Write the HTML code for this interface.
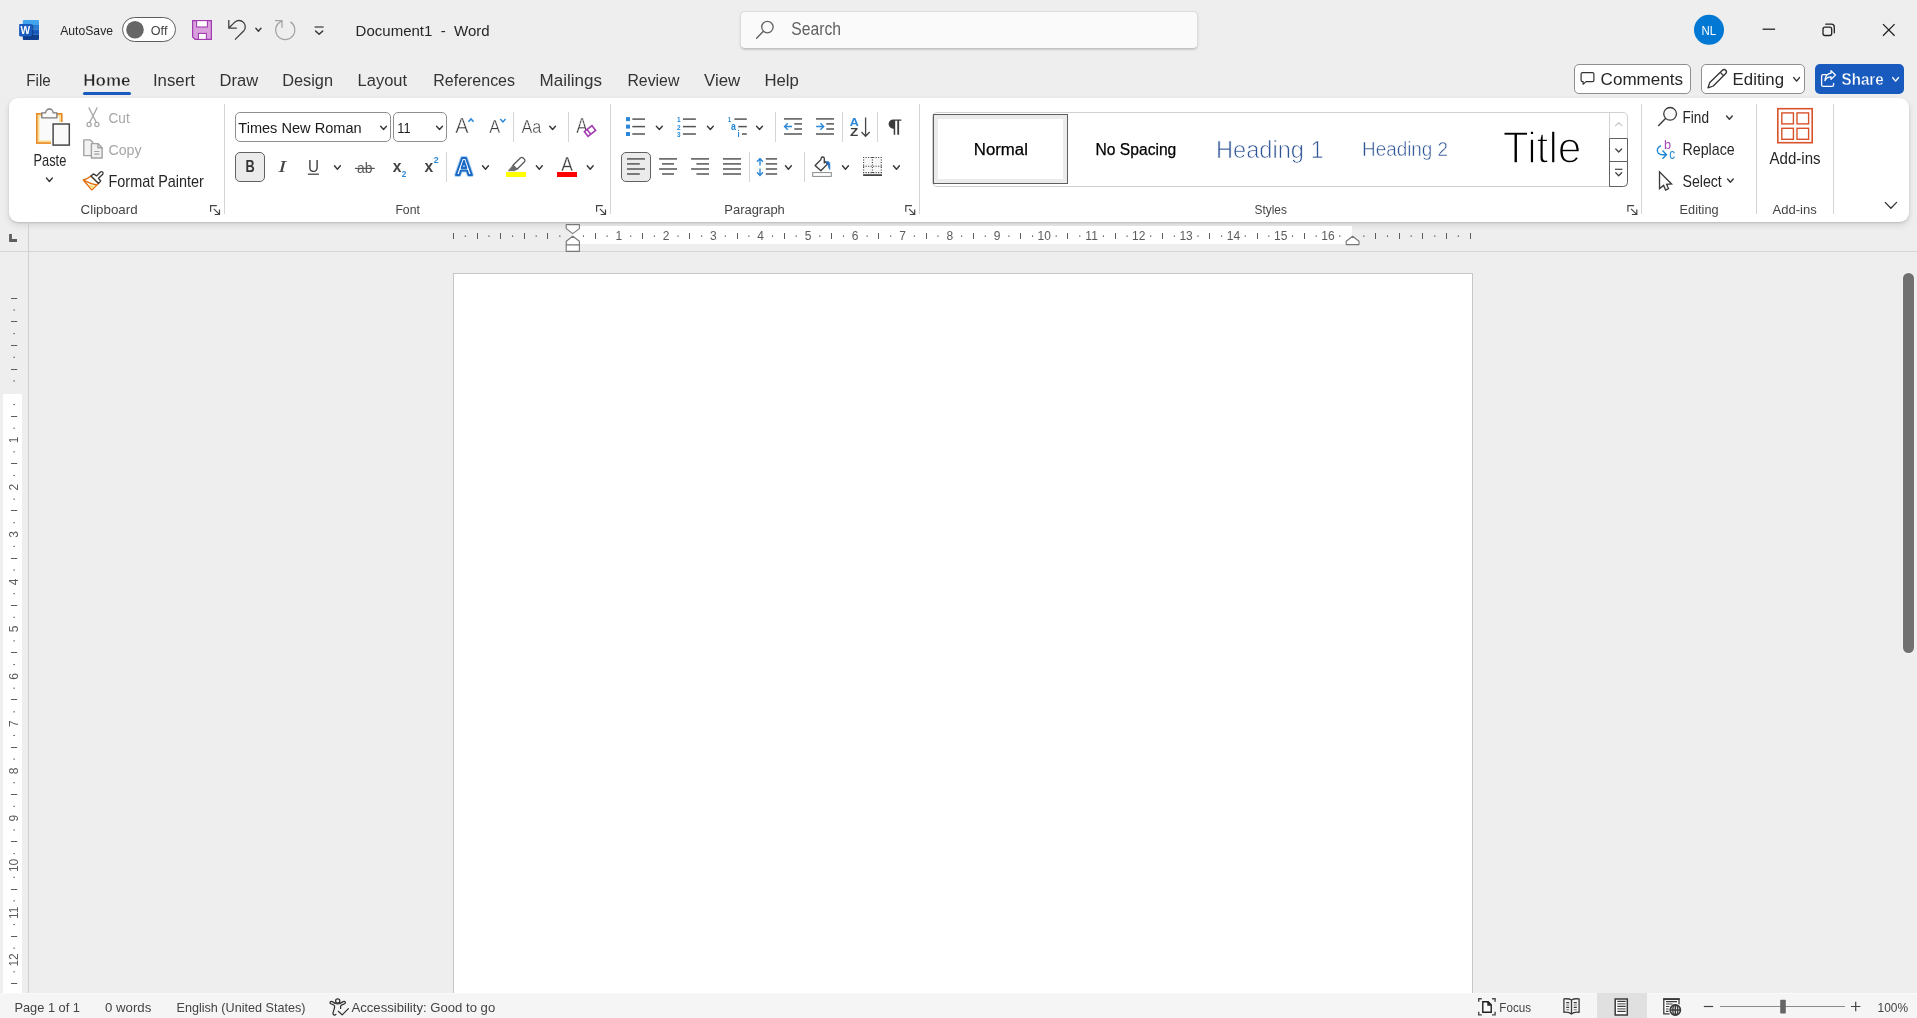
<!DOCTYPE html>
<html lang="en"><head><meta charset="utf-8"><title>Document1 - Word</title>
<style>
html,body{margin:0;padding:0}
body{width:1917px;height:1018px;overflow:hidden;background:#eeeeee;position:relative;font-family:"Liberation Sans",sans-serif}
div{position:absolute;box-sizing:border-box}
svg{position:absolute;left:0;top:0;will-change:transform}
text{font-family:"Liberation Sans",sans-serif;white-space:pre}
</style></head><body>
<div style="left:740px;top:10.5px;width:458px;height:38.5px;background:#fafafa;border:1px solid #dddddd;border-bottom-color:#c2c2c2;border-radius:5px;box-shadow:0 1px 2px rgba(0,0,0,.16)"></div>
<div style="left:1574px;top:64px;width:117px;height:30px;background:#fff;border:1px solid #8f8f8f;border-radius:5px"></div>
<div style="left:1701px;top:64px;width:104px;height:30px;background:#fff;border:1px solid #8f8f8f;border-radius:5px"></div>
<div style="left:1815px;top:64px;width:89px;height:30px;background:#185abd;border-radius:5px"></div>
<div style="left:9px;top:98px;width:1900px;height:124px;background:#fff;border-radius:9px;box-shadow:0 1px 2px rgba(0,0,0,.14),0 3px 7px rgba(0,0,0,.11)"></div>
<div style="left:235px;top:112px;width:156px;height:30px;background:#fff;border:1px solid #8f8f8f;border-radius:5px"></div>
<div style="left:393px;top:112px;width:54px;height:30px;background:#fff;border:1px solid #8f8f8f;border-radius:5px"></div>
<div style="left:235px;top:152px;width:30px;height:30px;background:#ebebeb;border:1px solid #616161;border-radius:5px"></div>
<div style="left:621px;top:152px;width:30px;height:30px;background:#ebebeb;border:1px solid #616161;border-radius:5px"></div>
<div style="left:932px;top:112px;width:696px;height:75px;background:#fff;border:1px solid #d1d1d1;border-radius:5px"></div>
<div style="left:933px;top:114px;width:135px;height:70px;background:#fff;border:1px solid #5e5e5e;box-shadow:inset 0 0 0 4px #ebebeb"></div>
<div style="left:573px;top:226px;width:779px;height:18px;background:#fff"></div>
<div style="left:3px;top:394px;width:19px;height:599px;background:#fff"></div>
<div style="left:0;top:251px;width:1917px;height:1px;background:#d6d6d6"></div>
<div style="left:28px;top:222px;width:1px;height:771px;background:#d0d0d0"></div>
<div style="left:453px;top:273px;width:1020px;height:760px;background:#fff;border:1px solid #c6c6c6"></div>
<div style="left:1903px;top:273px;width:11px;height:380px;background:#707070;border-radius:5.5px;box-shadow:0 0 0 1px #f3f3f3"></div>
<div style="left:0;top:993px;width:1917px;height:25px;background:#f5f5f5;border-top:1px solid #fafafa"></div>
<div style="left:1597px;top:993px;width:50px;height:25px;background:#e0e0e0"></div>
<svg width="1917" height="1018" viewBox="0 0 1917 1018">
<g><path d="M23.8 20h14.2a1 1 0 0 1 1 1V24.9H22.8V21a1 1 0 0 1 1-1z" fill="#41a5ee"/><rect x="22.8" y="24.9" width="16.2" height="4.95" fill="#2b7cd3"/><rect x="22.8" y="29.85" width="16.2" height="4.95" fill="#185abd"/><path d="M22.8 34.8H39v4.1a1 1 0 0 1-1 1H23.8a1 1 0 0 1-1-1z" fill="#103f91"/><rect x="23.4" y="24.6" width="9.8" height="12.9" rx="1.2" fill="#0a2a66" opacity=".5"/><rect x="19.1" y="23.9" width="12.8" height="12.5" rx="1.1" fill="#1a5cbe"/></g>
<text x="20.5" y="33.8" font-size="11.2" fill="#ffffff" font-weight="700" textLength="9.6" lengthAdjust="spacingAndGlyphs">W</text>
<text x="60.2" y="34.8" font-size="13.5" fill="#262626" textLength="52.8" lengthAdjust="spacingAndGlyphs">AutoSave</text>
<rect x="122.5" y="17.5" width="53" height="24" rx="12" fill="#ffffff" stroke="#5c5c5c" stroke-width="1"/>
<circle cx="135" cy="29.8" r="8.8" fill="#666666"/>
<text x="150.8" y="34.8" font-size="13.5" fill="#444444" textLength="16.6" lengthAdjust="spacingAndGlyphs">Off</text>
<path d="M192.6 20.6h18.8v18.8h-16.3l-2.5-2.5z" fill="#d9a0dc" stroke="#a23ab1" stroke-width="1.2" stroke-linejoin="miter"/><rect x="196.6" y="20.6" width="10.8" height="6.4" fill="#ffffff" stroke="#a23ab1" stroke-width="1.1"/><rect x="198.4" y="33.4" width="8" height="6" fill="#ffffff" stroke="#a23ab1" stroke-width="1.1"/>
<path d="M228.8 20.1V28.1H236.8 M228.9 28L234.75 22.15A6.3 6.3 0 0 1 243.65 31.05L235 39.6" fill="none" stroke="#404040" stroke-width="1.3" stroke-linejoin="miter"/>
<path d="M255.85 28.30 L258.40 31.20 L260.95 28.30" fill="none" stroke="#3a3a3a" stroke-width="1.45" stroke-linecap="round" stroke-linejoin="round"/>
<path d="M275 20.5H282V27.7 M282 20.5L277.8 24A9.6 9.6 0 1 0 290.4 21.9" fill="none" stroke="#a3a3a3" stroke-width="1.25"/>
<path d="M314.6 27h9" stroke="#444" stroke-width="1.3" fill="none"/>
<path d="M315.65 31.10 L319.15 34.20 L322.65 31.10" fill="none" stroke="#3a3a3a" stroke-width="1.45" stroke-linecap="round" stroke-linejoin="round"/>
<text x="355.6" y="36.0" font-size="15.5" fill="#262626" textLength="134.0" lengthAdjust="spacingAndGlyphs">Document1  -  Word</text>
<circle cx="767.4" cy="27.1" r="5.7" fill="none" stroke="#616161" stroke-width="1.3"/><path d="M763.4 31.3L756.6 38.3" stroke="#616161" stroke-width="1.4" stroke-linecap="round"/>
<text x="791.2" y="34.8" font-size="17.5" fill="#616161" textLength="49.8" lengthAdjust="spacingAndGlyphs">Search</text>
<circle cx="1709" cy="29.8" r="15" fill="#0078d4"/>
<text x="1701.6" y="34.6" font-size="12.5" fill="#ffffff" textLength="14.6" lengthAdjust="spacingAndGlyphs">NL</text>
<path d="M1762.6 29.2h12.5" stroke="#222" stroke-width="1.3" fill="none"/>
<rect x="1823" y="27.2" width="8.7" height="8.3" rx="2" fill="none" stroke="#222" stroke-width="1.3"/><path d="M1825.8 24.2H1831.3A3 3 0 0 1 1834.3 27.2V32.8" fill="none" stroke="#222" stroke-width="1.3" stroke-linecap="round"/>
<path d="M1883 24.1L1894.6 35.8M1894.6 24.1L1883 35.8" stroke="#222" stroke-width="1.3" fill="none"/>
<text x="26.3" y="86.1" font-size="17.2" fill="#333333" textLength="24.5" lengthAdjust="spacingAndGlyphs">File</text>
<text x="83.3" y="86.1" font-size="17" fill="#262626" font-weight="700" textLength="47.1" lengthAdjust="spacingAndGlyphs" stroke="#eeeeee" stroke-width=".45">Home</text>
<text x="152.9" y="86.1" font-size="17.2" fill="#333333" textLength="42.1" lengthAdjust="spacingAndGlyphs">Insert</text>
<text x="219.5" y="86.1" font-size="17.2" fill="#333333" textLength="38.6" lengthAdjust="spacingAndGlyphs">Draw</text>
<text x="282.2" y="86.1" font-size="17.2" fill="#333333" textLength="50.8" lengthAdjust="spacingAndGlyphs">Design</text>
<text x="357.6" y="86.1" font-size="17.2" fill="#333333" textLength="49.5" lengthAdjust="spacingAndGlyphs">Layout</text>
<text x="433.3" y="86.1" font-size="17.2" fill="#333333" textLength="81.7" lengthAdjust="spacingAndGlyphs">References</text>
<text x="539.6" y="86.1" font-size="17.2" fill="#333333" textLength="62.4" lengthAdjust="spacingAndGlyphs">Mailings</text>
<text x="627.4" y="86.1" font-size="17.2" fill="#333333" textLength="52.0" lengthAdjust="spacingAndGlyphs">Review</text>
<text x="704.1" y="86.1" font-size="17.2" fill="#333333" textLength="36.2" lengthAdjust="spacingAndGlyphs">View</text>
<text x="764.4" y="86.1" font-size="17.2" fill="#333333" textLength="34.4" lengthAdjust="spacingAndGlyphs">Help</text>
<rect x="83" y="92" width="48" height="3" rx="1.5" fill="#185abd"/>
<path d="M1582.5 72.6h10a1.4 1.4 0 0 1 1.4 1.4v6.2a1.4 1.4 0 0 1-1.4 1.4h-6.4l-3 2.6v-2.6h-.6a1.4 1.4 0 0 1-1.4-1.4V74a1.4 1.4 0 0 1 1.4-1.4z" fill="none" stroke="#333" stroke-width="1.2" stroke-linejoin="round"/>
<text x="1600.6" y="84.8" font-size="17.2" fill="#262626" textLength="82.4" lengthAdjust="spacingAndGlyphs">Comments</text>
<path d="M1722.4 70.2a2.3 2.3 0 0 1 3.3 3.3L1713.3 86l-5.3 1.8 1.8-5.3z M1720.3 72.4l3.3 3.3" fill="none" stroke="#333" stroke-width="1.3" stroke-linejoin="round"/>
<text x="1732.6" y="84.8" font-size="17.2" fill="#262626" textLength="51.4" lengthAdjust="spacingAndGlyphs">Editing</text>
<path d="M1793.75 77.60 L1796.60 81.10 L1799.45 77.60" fill="none" stroke="#333" stroke-width="1.45" stroke-linecap="round" stroke-linejoin="round"/>
<path d="M1826.6 74.6H1823.2a1.6 1.6 0 0 0-1.6 1.6v8.6a1.6 1.6 0 0 0 1.6 1.6h8.8a1.6 1.6 0 0 0 1.6-1.6V83.4" fill="none" stroke="#fff" stroke-width="1.3" stroke-linecap="round"/><path d="M1831 70.6L1835.4 75L1831 79.4V76.8C1828 76.8 1826.2 78 1824.9 80.6C1825.2 76.6 1827.4 73.6 1831 73.2z" fill="none" stroke="#fff" stroke-width="1.3" stroke-linejoin="round"/>
<text x="1841.6" y="84.8" font-size="17" fill="#ffffff" font-weight="700" textLength="42.0" lengthAdjust="spacingAndGlyphs" stroke="#185abd" stroke-width=".4">Share</text>
<path d="M1892.75 77.60 L1895.60 81.10 L1898.45 77.60" fill="none" stroke="#fff" stroke-width="1.45" stroke-linecap="round" stroke-linejoin="round"/>
<rect x="224" y="104" width="1" height="110" fill="#d4d4d4"/>
<rect x="610" y="104" width="1" height="110" fill="#d4d4d4"/>
<rect x="919" y="104" width="1" height="110" fill="#d4d4d4"/>
<rect x="1641" y="104" width="1" height="110" fill="#d4d4d4"/>
<rect x="1756" y="104" width="1" height="110" fill="#d4d4d4"/>
<rect x="1833" y="104" width="1" height="110" fill="#d4d4d4"/>
<rect x="513" y="112" width="1" height="30" fill="#d4d4d4"/>
<rect x="568" y="112" width="1" height="30" fill="#d4d4d4"/>
<rect x="775" y="112" width="1" height="30" fill="#d4d4d4"/>
<rect x="842" y="112" width="1" height="30" fill="#d4d4d4"/>
<rect x="877" y="112" width="1" height="30" fill="#d4d4d4"/>
<rect x="446" y="152" width="1" height="30" fill="#d4d4d4"/>
<rect x="749" y="152" width="1" height="30" fill="#d4d4d4"/>
<rect x="804" y="152" width="1" height="30" fill="#d4d4d4"/>
<rect x="36.9" y="113.9" width="24.8" height="29.1" fill="#fafafa" stroke="#e8851f" stroke-width="1.7"/><rect x="38.6" y="115.6" width="21.4" height="25.7" fill="none" stroke="#f9dc8c" stroke-width="1.6"/><path d="M41.8 117.8V112.8H45.6A3.8 3.8 0 0 1 53.2 112.8H56.9V117.8z" fill="#fafafa" stroke="#7d7b78" stroke-width="1.35" stroke-linejoin="round"/><rect x="51" y="122" width="20" height="22" fill="#fff"/><rect x="53.1" y="124" width="16.2" height="21.1" fill="#fafafa" stroke="#484848" stroke-width="1.5"/>
<text x="33.5" y="165.9" font-size="15.7" fill="#262626" textLength="32.8" lengthAdjust="spacingAndGlyphs">Paste</text>
<path d="M46.45 178.00 L49.40 181.40 L52.35 178.00" fill="none" stroke="#3a3a3a" stroke-width="1.45" stroke-linecap="round" stroke-linejoin="round"/>
<g fill="none" stroke="#a9a9a9" stroke-width="1.25"><path d="M88.7 107.4L96.3 122.4M97.3 107.4L89.7 122.4"/><circle cx="89.1" cy="124.5" r="2.1"/><circle cx="96.9" cy="124.5" r="2.1"/></g>
<text x="108.5" y="122.8" font-size="15.5" fill="#a6a6a6" textLength="21.2" lengthAdjust="spacingAndGlyphs">Cut</text>
<g fill="#f2f2f2" stroke="#a2a2a2" stroke-width="1.4" stroke-linejoin="round"><path d="M83.8 139.9H90.4L92.8 142.3V155.6H83.8z"/><path d="M91.4 143.6H97.9L102.1 147.8V158H91.4z"/><path d="M97.9 143.6V147.8H102.1" fill="none"/><path d="M94.2 151.5H99.4M94.2 154.2H99.4" fill="none" stroke-width="1.2"/></g>
<text x="108.5" y="154.7" font-size="15.5" fill="#a6a6a6" textLength="33.1" lengthAdjust="spacingAndGlyphs">Copy</text>
<g stroke-linejoin="round" transform="translate(0 .6)"><path d="M91 175.4C88.6 177.6 86 178.7 83.3 179.4L91.7 189.3L98.5 182.8z" fill="#fdfdfd" stroke="#e36c0a" stroke-width="1.35"/><path d="M88.6 183.6L95.4 185.3L91.7 188.5z" fill="#fbe08a" stroke="none"/><path d="M84.4 180.1C88.4 182.2 92.6 183.7 96.7 184.4" stroke="#e36c0a" stroke-width="1.35" fill="none"/><path d="M91 175.4L93.3 173.3L96.7 175.3L100.4 171.4A1.65 1.65 0 0 1 102.8 173.6L98.5 177.7L100.7 180.4L98.6 182.8z" fill="#fff" stroke="#3a3a3a" stroke-width="1.35"/></g>
<text x="108.5" y="186.5" font-size="15.7" fill="#262626" textLength="95.4" lengthAdjust="spacingAndGlyphs">Format Painter</text>
<text x="80.6" y="213.7" font-size="13.5" fill="#444444" textLength="57.0" lengthAdjust="spacingAndGlyphs">Clipboard</text>
<path d="M210.6 211.8V205.6H216.8 M213.8 208.8L219.4 214.4 M219.5 209.6V214.5H214.6" fill="none" stroke="#444" stroke-width="1.2"/>
<text x="238.3" y="132.8" font-size="15.5" fill="#1a1a1a" textLength="123.3" lengthAdjust="spacingAndGlyphs">Times New Roman</text>
<path d="M380.65 126.20 L383.55 129.50 L386.45 126.20" fill="none" stroke="#3a3a3a" stroke-width="1.45" stroke-linecap="round" stroke-linejoin="round"/>
<text x="397.3" y="132.8" font-size="15.5" fill="#1a1a1a" textLength="13.3" lengthAdjust="spacingAndGlyphs">11</text>
<path d="M436.55 126.20 L439.50 129.50 L442.45 126.20" fill="none" stroke="#3a3a3a" stroke-width="1.45" stroke-linecap="round" stroke-linejoin="round"/>
<text x="455.2" y="133.2" font-size="22.6" fill="#3d3d3d" textLength="13.3" lengthAdjust="spacingAndGlyphs" stroke="#fff" stroke-width=".5">A</text>
<path d="M468.4 121.8L471 118.9L473.6 121.8" fill="none" stroke="#2b88d8" stroke-width="1.5"/>
<text x="489.3" y="133.2" font-size="17.8" fill="#3d3d3d" textLength="11.0" lengthAdjust="spacingAndGlyphs" stroke="#fff" stroke-width=".4">A</text>
<path d="M500.3 119.1L502.9 122L505.5 119.1" fill="none" stroke="#2b88d8" stroke-width="1.5"/>
<text x="521.5" y="133.2" font-size="17.6" fill="#3d3d3d" textLength="19.9" lengthAdjust="spacingAndGlyphs" stroke="#fff" stroke-width=".4">Aa</text>
<path d="M549.75 126.20 L552.60 129.50 L555.45 126.20" fill="none" stroke="#3a3a3a" stroke-width="1.45" stroke-linecap="round" stroke-linejoin="round"/>
<text x="576.3" y="133.2" font-size="22.6" fill="#3d3d3d" textLength="11.5" lengthAdjust="spacingAndGlyphs" stroke="#fff" stroke-width=".5">A</text>
<g transform="rotate(-38 590 131)"><rect x="585.2" y="128" width="9.6" height="6" fill="#fff" stroke="#a23ab1" stroke-width="1.6"/><path d="M588.6 128V134" stroke="#a23ab1" stroke-width="1.5"/></g>
<text x="245.6" y="171.6" font-size="16.6" fill="#333" font-weight="700" textLength="9.2" lengthAdjust="spacingAndGlyphs">B</text>
<text x="278.2" y="171.6" font-size="17.5" fill="#444" textLength="8.0" lengthAdjust="spacingAndGlyphs" font-style="italic" style="font-family:'Liberation Serif',serif">I</text>
<text x="307.9" y="171.6" font-size="16.6" fill="#444" textLength="11.0" lengthAdjust="spacingAndGlyphs">U</text>
<path d="M307.9 174.2H318.9" stroke="#444" stroke-width="1.3" fill="none"/>
<path d="M334.45 165.80 L337.40 169.30 L340.35 165.80" fill="none" stroke="#3a3a3a" stroke-width="1.45" stroke-linecap="round" stroke-linejoin="round"/>
<text x="357.0" y="173.0" font-size="15" fill="#555" textLength="15.4" lengthAdjust="spacingAndGlyphs">ab</text>
<path d="M354.9 168.4H374.8" stroke="#555" stroke-width="1.2" fill="none"/>
<text x="392.7" y="171.6" font-size="17" fill="#444" font-weight="700" textLength="8.7" lengthAdjust="spacingAndGlyphs">x</text>
<text x="401.8" y="177.1" font-size="8.8" fill="#2b88d8" font-weight="700" textLength="4.6" lengthAdjust="spacingAndGlyphs">2</text>
<text x="424.5" y="171.6" font-size="17" fill="#444" font-weight="700" textLength="8.7" lengthAdjust="spacingAndGlyphs">x</text>
<text x="433.7" y="163.3" font-size="9" fill="#2b88d8" font-weight="700" textLength="4.9" lengthAdjust="spacingAndGlyphs">2</text>
<text x="455.6" y="174.6" font-size="24" fill="#ffffff" font-weight="700" textLength="17.0" lengthAdjust="spacingAndGlyphs" stroke="#a9d1f3" stroke-width="3.8" stroke-linejoin="round">A</text>
<text x="455.6" y="174.6" font-size="24" fill="#ffffff" font-weight="700" textLength="17.0" lengthAdjust="spacingAndGlyphs" stroke="#1a69c4" stroke-width="2" stroke-linejoin="round">A</text>
<path d="M482.55 165.80 L485.50 169.30 L488.45 165.80" fill="none" stroke="#3a3a3a" stroke-width="1.45" stroke-linecap="round" stroke-linejoin="round"/>
<path d="M520.6 157.8a1.6 1.6 0 0 1 2.3 0l1.6 1.6a1.6 1.6 0 0 1 0 2.3L517 169.2L513 165.2z" fill="#fff" stroke="#555" stroke-width="1.25" stroke-linejoin="round"/><path d="M513 165.2L517 169.2L514.6 170.7H508.4z" fill="#6a6a6a" stroke="#6a6a6a" stroke-width=".8" stroke-linejoin="round"/>
<rect x="506" y="172" width="20" height="5" fill="#ffff00"/>
<path d="M536.35 165.80 L539.30 169.30 L542.25 165.80" fill="none" stroke="#3a3a3a" stroke-width="1.45" stroke-linecap="round" stroke-linejoin="round"/>
<text x="561.3" y="170.8" font-size="19.6" fill="#3d3d3d" textLength="11.7" lengthAdjust="spacingAndGlyphs" stroke="#fff" stroke-width=".3">A</text>
<rect x="557" y="172" width="20" height="5" fill="#ff0000"/>
<path d="M587.25 165.80 L590.20 169.30 L593.15 165.80" fill="none" stroke="#3a3a3a" stroke-width="1.45" stroke-linecap="round" stroke-linejoin="round"/>
<path d="M596.6 211.8V205.6H602.8 M599.8 208.8L605.4 214.4 M605.5 209.6V214.5H600.6" fill="none" stroke="#444" stroke-width="1.2"/>
<text x="395.4" y="213.7" font-size="13.5" fill="#444444" textLength="24.5" lengthAdjust="spacingAndGlyphs">Font</text>
<rect x="626" y="117.1" width="4" height="4" fill="#2b88d8"/>
<path d="M632.3 119.1H645.0" stroke="#555555" stroke-width="1.5" fill="none"/>
<rect x="626" y="124.6" width="4" height="4" fill="#2b88d8"/>
<path d="M632.3 126.6H645.0" stroke="#555555" stroke-width="1.5" fill="none"/>
<rect x="626" y="132.0" width="4" height="4" fill="#2b88d8"/>
<path d="M632.3 134.0H645.0" stroke="#555555" stroke-width="1.5" fill="none"/>
<path d="M656.35 126.20 L659.35 129.50 L662.35 126.20" fill="none" stroke="#3a3a3a" stroke-width="1.45" stroke-linecap="round" stroke-linejoin="round"/>
<text x="676.9" y="122.1" font-size="7.3" fill="#1e86d4" font-weight="700" textLength="3.6" lengthAdjust="spacingAndGlyphs">1</text>
<path d="M682.9 119.1H695.9" stroke="#555555" stroke-width="1.5" fill="none"/>
<text x="676.9" y="129.6" font-size="7.3" fill="#1e86d4" font-weight="700" textLength="3.6" lengthAdjust="spacingAndGlyphs">2</text>
<path d="M682.9 126.6H695.9" stroke="#555555" stroke-width="1.5" fill="none"/>
<text x="676.9" y="137.0" font-size="7.3" fill="#1e86d4" font-weight="700" textLength="3.6" lengthAdjust="spacingAndGlyphs">3</text>
<path d="M682.9 134.0H695.9" stroke="#555555" stroke-width="1.5" fill="none"/>
<path d="M707.45 126.20 L710.35 129.50 L713.25 126.20" fill="none" stroke="#3a3a3a" stroke-width="1.45" stroke-linecap="round" stroke-linejoin="round"/>
<text x="728.1" y="122.1" font-size="7.3" fill="#1e86d4" font-weight="700" textLength="3.1" lengthAdjust="spacingAndGlyphs">1</text>
<path d="M734.4 119.1H746.8" stroke="#555555" stroke-width="1.5" fill="none"/>
<text x="731.1" y="129.8" font-size="10.6" fill="#1e86d4" font-weight="700" textLength="4.9" lengthAdjust="spacingAndGlyphs">a</text>
<path d="M738.3 126.6H746.8" stroke="#555555" stroke-width="1.5" fill="none"/>
<text x="737.6" y="136.9" font-size="8.8" fill="#1e86d4" font-weight="700" textLength="2.2" lengthAdjust="spacingAndGlyphs">i</text>
<path d="M742.0 134.0H746.8" stroke="#555555" stroke-width="1.5" fill="none"/>
<path d="M756.55 126.20 L759.50 129.50 L762.45 126.20" fill="none" stroke="#3a3a3a" stroke-width="1.45" stroke-linecap="round" stroke-linejoin="round"/>
<path d="M784.0 118.9H802.0" stroke="#555555" stroke-width="1.5" fill="none"/>
<path d="M784.0 134.0H802.0" stroke="#555555" stroke-width="1.5" fill="none"/>
<path d="M794.3 123.9H802.0" stroke="#555555" stroke-width="1.5" fill="none"/>
<path d="M794.3 129.0H802.0" stroke="#555555" stroke-width="1.5" fill="none"/>
<path d="M784.6 126.5H792 M787.8 123.2L784.5 126.5L787.8 129.8" fill="none" stroke="#2b88d8" stroke-width="1.4"/>
<path d="M816.0 118.9H834.0" stroke="#555555" stroke-width="1.5" fill="none"/>
<path d="M816.0 134.0H834.0" stroke="#555555" stroke-width="1.5" fill="none"/>
<path d="M826.3 123.9H834.0" stroke="#555555" stroke-width="1.5" fill="none"/>
<path d="M826.3 129.0H834.0" stroke="#555555" stroke-width="1.5" fill="none"/>
<path d="M816.2 126.5H823.6 M820.4 123.2L823.7 126.5L820.4 129.8" fill="none" stroke="#2b88d8" stroke-width="1.4"/>
<text x="849.7" y="125.5" font-size="11.6" fill="#2b88d8" font-weight="700" textLength="9.1" lengthAdjust="spacingAndGlyphs">A</text>
<text x="850.0" y="136.4" font-size="11" fill="#3d3d3d" font-weight="700" textLength="8.2" lengthAdjust="spacingAndGlyphs">Z</text>
<path d="M865.6 117.4V135.8 M861.5 132L865.6 136.2L869.7 132" fill="none" stroke="#444" stroke-width="1.3"/>
<path d="M893.2 119.5H901.4V120.8H899.1V134.7H897.3V120.8H895.2V134.7H893.7V128.7H893.2A4.6 4.6 0 0 1 893.2 119.5z" fill="#3b3b3b"/>
<path d="M627.0 158.9H645.0" stroke="#555555" stroke-width="1.5" fill="none"/>
<path d="M659.1 158.9H677.0" stroke="#555555" stroke-width="1.5" fill="none"/>
<path d="M691.1 158.9H709.0" stroke="#555555" stroke-width="1.5" fill="none"/>
<path d="M723.0 158.9H741.0" stroke="#555555" stroke-width="1.5" fill="none"/>
<path d="M765.8 158.9H777.1" stroke="#555555" stroke-width="1.5" fill="none"/>
<path d="M627.0 163.9H639.8" stroke="#555555" stroke-width="1.5" fill="none"/>
<path d="M662.0 163.9H674.0" stroke="#555555" stroke-width="1.5" fill="none"/>
<path d="M696.4 163.9H709.0" stroke="#555555" stroke-width="1.5" fill="none"/>
<path d="M723.0 163.9H741.0" stroke="#555555" stroke-width="1.5" fill="none"/>
<path d="M765.8 163.9H777.1" stroke="#555555" stroke-width="1.5" fill="none"/>
<path d="M627.0 169.0H645.0" stroke="#555555" stroke-width="1.5" fill="none"/>
<path d="M659.1 169.0H677.0" stroke="#555555" stroke-width="1.5" fill="none"/>
<path d="M691.1 169.0H709.0" stroke="#555555" stroke-width="1.5" fill="none"/>
<path d="M723.0 169.0H741.0" stroke="#555555" stroke-width="1.5" fill="none"/>
<path d="M765.8 169.0H777.1" stroke="#555555" stroke-width="1.5" fill="none"/>
<path d="M627.0 174.0H639.8" stroke="#555555" stroke-width="1.5" fill="none"/>
<path d="M662.0 174.0H674.0" stroke="#555555" stroke-width="1.5" fill="none"/>
<path d="M696.4 174.0H709.0" stroke="#555555" stroke-width="1.5" fill="none"/>
<path d="M723.0 174.0H741.0" stroke="#555555" stroke-width="1.5" fill="none"/>
<path d="M765.8 174.0H777.1" stroke="#555555" stroke-width="1.5" fill="none"/>
<path d="M760 158.7V165.6 M760 168.4V175.3 M757 161.8L760 158.6L763 161.8 M757 172.2L760 175.4L763 172.2" fill="none" stroke="#2b88d8" stroke-width="1.4"/>
<path d="M785.45 165.80 L788.40 169.30 L791.35 165.80" fill="none" stroke="#3a3a3a" stroke-width="1.45" stroke-linecap="round" stroke-linejoin="round"/>
<path d="M821.1 159.4L815.1 165.5L820.9 170.8L827.6 163.9L824.4 161" fill="#fafafa" stroke="#3a3a3a" stroke-width="1.35" stroke-linejoin="round"/><path d="M821.1 159.4V158.6A1.6 1.6 0 0 1 824.3 158.6V163.6" fill="none" stroke="#3a3a3a" stroke-width="1.3"/><path d="M826 161.7C828.2 160.8 829.8 162 829.8 164.2V169.6C828.4 168 828.6 165.2 827.6 163.9z" fill="#1e6fc4" stroke="#1e6fc4" stroke-width=".7" stroke-linejoin="round"/>
<rect x="812.7" y="172.6" width="18.6" height="3.8" fill="#fff" stroke="#8a8a8a" stroke-width="1"/>
<path d="M842.45 165.80 L845.45 169.30 L848.45 165.80" fill="none" stroke="#3a3a3a" stroke-width="1.45" stroke-linecap="round" stroke-linejoin="round"/>
<rect x="863.6" y="157.5" width="17.8" height="15.4" fill="#f7f7f7"/>
<g stroke="#3a3a3a" stroke-width="1.1" fill="none" stroke-dasharray="1.1 1.4"><path d="M863.1 157.5H882M863.1 166.2H882M863.1 172.6H882M863.6 157V173M872.4 157V173M881.3 157V173"/></g>
<path d="M863.1 175.1H882" stroke="#444" stroke-width="1.8" fill="none"/>
<path d="M893.45 165.80 L896.45 169.30 L899.45 165.80" fill="none" stroke="#3a3a3a" stroke-width="1.45" stroke-linecap="round" stroke-linejoin="round"/>
<path d="M905.8000000000001 211.8V205.6H912.0 M909.0 208.8L914.6 214.4 M914.7 209.6V214.5H909.8000000000001" fill="none" stroke="#444" stroke-width="1.2"/>
<text x="724.3" y="213.7" font-size="13.5" fill="#444444" textLength="60.5" lengthAdjust="spacingAndGlyphs">Paragraph</text>
<text x="973.8" y="154.8" font-size="15.6" fill="#000" textLength="54.1" lengthAdjust="spacingAndGlyphs" stroke="#000" stroke-width=".25">Normal</text>
<text x="1095.5" y="154.8" font-size="15.6" fill="#000" textLength="80.8" lengthAdjust="spacingAndGlyphs" stroke="#000" stroke-width=".25">No Spacing</text>
<text x="1216.0" y="157.5" font-size="24.6" fill="#2f5496" textLength="107.7" lengthAdjust="spacingAndGlyphs" stroke="#fff" stroke-width=".7">Heading 1</text>
<text x="1362.0" y="155.9" font-size="19.6" fill="#2f5496" textLength="86.1" lengthAdjust="spacingAndGlyphs" stroke="#fff" stroke-width=".5">Heading 2</text>
<text x="1502.8" y="162.9" font-size="43.5" fill="#000" textLength="78.7" lengthAdjust="spacingAndGlyphs" stroke="#fff" stroke-width="1.5">Title</text>
<rect x="1609" y="113" width="1" height="25" fill="#d1d1d1"/>
<path d="M1609.5 138.5H1627.5V161.5H1609.5z" fill="#fff" stroke="#616161" stroke-width="1"/><path d="M1609.5 161.5H1627.5V182.5A4 4 0 0 1 1623.5 186.5H1609.5z" fill="#fff" stroke="#616161" stroke-width="1"/>
<path d="M1615.55 125.60 L1618.70 122.80 L1621.85 125.60" fill="none" stroke="#c4c4c4" stroke-width="1.2" stroke-linecap="round" stroke-linejoin="round"/>
<path d="M1615.75 149.00 L1618.70 152.00 L1621.65 149.00" fill="none" stroke="#444" stroke-width="1.3" stroke-linecap="round" stroke-linejoin="round"/>
<path d="M1615 169.3H1622.4" stroke="#444" stroke-width="1.2" fill="none"/>
<path d="M1615.75 172.80 L1618.70 175.80 L1621.65 172.80" fill="none" stroke="#444" stroke-width="1.3" stroke-linecap="round" stroke-linejoin="round"/>
<text x="1254.5" y="213.6" font-size="13.5" fill="#444444" textLength="32.4" lengthAdjust="spacingAndGlyphs">Styles</text>
<path d="M1627.8999999999999 211.8V205.6H1634.1 M1631.1 208.8L1636.7 214.4 M1636.8 209.6V214.5H1631.8999999999999" fill="none" stroke="#444" stroke-width="1.2"/>
<circle cx="1670.1" cy="113.85" r="6.35" fill="#fafafa" stroke="#3a3a3a" stroke-width="1.3"/><path d="M1665.5 118.5L1658.2 126.1" stroke="#3a3a3a" stroke-width="1.4"/>
<text x="1682.5" y="122.5" font-size="15.7" fill="#262626" textLength="26.5" lengthAdjust="spacingAndGlyphs">Find</text>
<path d="M1726.55 116.00 L1729.40 119.30 L1732.25 116.00" fill="none" stroke="#3a3a3a" stroke-width="1.45" stroke-linecap="round" stroke-linejoin="round"/>
<text x="1663.9" y="148.6" font-size="13.2" fill="#a846b9" textLength="7.1" lengthAdjust="spacingAndGlyphs">b</text>
<text x="1669.2" y="159.0" font-size="14" fill="#1e86d4" textLength="5.9" lengthAdjust="spacingAndGlyphs">c</text>
<path d="M1661 145.6C1657.4 146.8 1656.2 151 1658.4 153.2C1659.6 154.4 1661 154.7 1662.4 154.7H1666 M1662.5 150.5L1666.5 154.7L1662.5 158.8" fill="none" stroke="#1e86d4" stroke-width="1.4"/>
<text x="1682.5" y="154.6" font-size="15.7" fill="#262626" textLength="52.2" lengthAdjust="spacingAndGlyphs">Replace</text>
<path d="M1659.5 171.8V188.6L1663.6 185.4L1665.6 190L1668.5 188.6L1666.6 184.3L1671.6 184z" fill="#fafafa" stroke="#3a3a3a" stroke-width="1.3" stroke-linejoin="miter"/>
<text x="1682.5" y="186.5" font-size="15.7" fill="#262626" textLength="39.3" lengthAdjust="spacingAndGlyphs">Select</text>
<path d="M1727.55 179.00 L1730.40 182.20 L1733.25 179.00" fill="none" stroke="#3a3a3a" stroke-width="1.45" stroke-linecap="round" stroke-linejoin="round"/>
<text x="1679.6" y="214.2" font-size="13.5" fill="#444444" textLength="39.0" lengthAdjust="spacingAndGlyphs">Editing</text>
<g fill="none" stroke="#d8532b"><rect x="1777.8" y="108.7" width="34.4" height="34" stroke-width="1.6"/><g stroke-width="1.4"><rect x="1781.8" y="112.9" width="11.6" height="11"/><rect x="1797" y="112.9" width="11.6" height="11"/><rect x="1781.8" y="128.3" width="11.6" height="11"/><rect x="1797" y="128.3" width="11.6" height="11"/></g></g>
<text x="1769.6" y="163.8" font-size="15.7" fill="#262626" textLength="51.0" lengthAdjust="spacingAndGlyphs">Add-ins</text>
<text x="1772.5" y="214.2" font-size="13.5" fill="#444444" textLength="44.2" lengthAdjust="spacingAndGlyphs">Add-ins</text>
<path d="M1885.20 202.40 L1890.90 208.20 L1896.60 202.40" fill="none" stroke="#333" stroke-width="1.3" stroke-linecap="round" stroke-linejoin="round"/>
<path d="M10.5 234.1V240.5H17" fill="none" stroke="#5e5e5e" stroke-width="2.8"/>
<rect x="547" y="233" width="1" height="6" fill="#5c5c5c"/>
<rect x="524" y="233" width="1" height="6" fill="#5c5c5c"/>
<rect x="500" y="233" width="1" height="6" fill="#5c5c5c"/>
<rect x="477" y="233" width="1" height="6" fill="#5c5c5c"/>
<rect x="453" y="233" width="1" height="6" fill="#5c5c5c"/>
<rect x="559.28" y="235.4" width="1.1" height="1.5" fill="#5c5c5c"/>
<rect x="535.65" y="235.4" width="1.1" height="1.5" fill="#5c5c5c"/>
<rect x="512.01" y="235.4" width="1.1" height="1.5" fill="#5c5c5c"/>
<rect x="488.38" y="235.4" width="1.1" height="1.5" fill="#5c5c5c"/>
<rect x="464.74" y="235.4" width="1.1" height="1.5" fill="#5c5c5c"/>
<rect x="582.92" y="235.4" width="1.1" height="1.5" fill="#5c5c5c"/>
<rect x="595" y="233" width="1" height="6" fill="#5c5c5c"/>
<rect x="606.55" y="235.4" width="1.1" height="1.5" fill="#5c5c5c"/>
<text x="618.9" y="240" font-size="12" fill="#5c5c5c" text-anchor="middle">1</text>
<rect x="630.19" y="235.4" width="1.1" height="1.5" fill="#5c5c5c"/>
<rect x="642" y="233" width="1" height="6" fill="#5c5c5c"/>
<rect x="653.82" y="235.4" width="1.1" height="1.5" fill="#5c5c5c"/>
<text x="666.1" y="240" font-size="12" fill="#5c5c5c" text-anchor="middle">2</text>
<rect x="677.46" y="235.4" width="1.1" height="1.5" fill="#5c5c5c"/>
<rect x="689" y="233" width="1" height="6" fill="#5c5c5c"/>
<rect x="701.09" y="235.4" width="1.1" height="1.5" fill="#5c5c5c"/>
<text x="713.4" y="240" font-size="12" fill="#5c5c5c" text-anchor="middle">3</text>
<rect x="724.73" y="235.4" width="1.1" height="1.5" fill="#5c5c5c"/>
<rect x="737" y="233" width="1" height="6" fill="#5c5c5c"/>
<rect x="748.36" y="235.4" width="1.1" height="1.5" fill="#5c5c5c"/>
<text x="760.7" y="240" font-size="12" fill="#5c5c5c" text-anchor="middle">4</text>
<rect x="772.00" y="235.4" width="1.1" height="1.5" fill="#5c5c5c"/>
<rect x="784" y="233" width="1" height="6" fill="#5c5c5c"/>
<rect x="795.63" y="235.4" width="1.1" height="1.5" fill="#5c5c5c"/>
<text x="808.0" y="240" font-size="12" fill="#5c5c5c" text-anchor="middle">5</text>
<rect x="819.27" y="235.4" width="1.1" height="1.5" fill="#5c5c5c"/>
<rect x="831" y="233" width="1" height="6" fill="#5c5c5c"/>
<rect x="842.90" y="235.4" width="1.1" height="1.5" fill="#5c5c5c"/>
<text x="855.2" y="240" font-size="12" fill="#5c5c5c" text-anchor="middle">6</text>
<rect x="866.54" y="235.4" width="1.1" height="1.5" fill="#5c5c5c"/>
<rect x="878" y="233" width="1" height="6" fill="#5c5c5c"/>
<rect x="890.17" y="235.4" width="1.1" height="1.5" fill="#5c5c5c"/>
<text x="902.5" y="240" font-size="12" fill="#5c5c5c" text-anchor="middle">7</text>
<rect x="913.81" y="235.4" width="1.1" height="1.5" fill="#5c5c5c"/>
<rect x="926" y="233" width="1" height="6" fill="#5c5c5c"/>
<rect x="937.44" y="235.4" width="1.1" height="1.5" fill="#5c5c5c"/>
<text x="949.8" y="240" font-size="12" fill="#5c5c5c" text-anchor="middle">8</text>
<rect x="961.08" y="235.4" width="1.1" height="1.5" fill="#5c5c5c"/>
<rect x="973" y="233" width="1" height="6" fill="#5c5c5c"/>
<rect x="984.71" y="235.4" width="1.1" height="1.5" fill="#5c5c5c"/>
<text x="997.0" y="240" font-size="12" fill="#5c5c5c" text-anchor="middle">9</text>
<rect x="1008.35" y="235.4" width="1.1" height="1.5" fill="#5c5c5c"/>
<rect x="1020" y="233" width="1" height="6" fill="#5c5c5c"/>
<rect x="1031.98" y="235.4" width="1.1" height="1.5" fill="#5c5c5c"/>
<text x="1044.3" y="240" font-size="12" fill="#5c5c5c" text-anchor="middle">10</text>
<rect x="1055.62" y="235.4" width="1.1" height="1.5" fill="#5c5c5c"/>
<rect x="1067" y="233" width="1" height="6" fill="#5c5c5c"/>
<rect x="1079.25" y="235.4" width="1.1" height="1.5" fill="#5c5c5c"/>
<text x="1091.6" y="240" font-size="12" fill="#5c5c5c" text-anchor="middle">11</text>
<rect x="1102.89" y="235.4" width="1.1" height="1.5" fill="#5c5c5c"/>
<rect x="1115" y="233" width="1" height="6" fill="#5c5c5c"/>
<rect x="1126.52" y="235.4" width="1.1" height="1.5" fill="#5c5c5c"/>
<text x="1138.8" y="240" font-size="12" fill="#5c5c5c" text-anchor="middle">12</text>
<rect x="1150.16" y="235.4" width="1.1" height="1.5" fill="#5c5c5c"/>
<rect x="1162" y="233" width="1" height="6" fill="#5c5c5c"/>
<rect x="1173.79" y="235.4" width="1.1" height="1.5" fill="#5c5c5c"/>
<text x="1186.1" y="240" font-size="12" fill="#5c5c5c" text-anchor="middle">13</text>
<rect x="1197.43" y="235.4" width="1.1" height="1.5" fill="#5c5c5c"/>
<rect x="1209" y="233" width="1" height="6" fill="#5c5c5c"/>
<rect x="1221.06" y="235.4" width="1.1" height="1.5" fill="#5c5c5c"/>
<text x="1233.4" y="240" font-size="12" fill="#5c5c5c" text-anchor="middle">14</text>
<rect x="1244.70" y="235.4" width="1.1" height="1.5" fill="#5c5c5c"/>
<rect x="1257" y="233" width="1" height="6" fill="#5c5c5c"/>
<rect x="1268.33" y="235.4" width="1.1" height="1.5" fill="#5c5c5c"/>
<text x="1280.7" y="240" font-size="12" fill="#5c5c5c" text-anchor="middle">15</text>
<rect x="1291.97" y="235.4" width="1.1" height="1.5" fill="#5c5c5c"/>
<rect x="1304" y="233" width="1" height="6" fill="#5c5c5c"/>
<rect x="1315.60" y="235.4" width="1.1" height="1.5" fill="#5c5c5c"/>
<text x="1327.9" y="240" font-size="12" fill="#5c5c5c" text-anchor="middle">16</text>
<rect x="1339.24" y="235.4" width="1.1" height="1.5" fill="#5c5c5c"/>
<rect x="1375" y="233" width="1" height="6" fill="#5c5c5c"/>
<rect x="1399" y="233" width="1" height="6" fill="#5c5c5c"/>
<rect x="1422" y="233" width="1" height="6" fill="#5c5c5c"/>
<rect x="1446" y="233" width="1" height="6" fill="#5c5c5c"/>
<rect x="1470" y="233" width="1" height="6" fill="#5c5c5c"/>
<rect x="1363.32" y="235.4" width="1.1" height="1.5" fill="#5c5c5c"/>
<rect x="1386.95" y="235.4" width="1.1" height="1.5" fill="#5c5c5c"/>
<rect x="1410.59" y="235.4" width="1.1" height="1.5" fill="#5c5c5c"/>
<rect x="1434.22" y="235.4" width="1.1" height="1.5" fill="#5c5c5c"/>
<rect x="1457.86" y="235.4" width="1.1" height="1.5" fill="#5c5c5c"/>
<g fill="#fff" stroke="#777" stroke-width="1.1" stroke-linejoin="round"><path d="M566.2 224.6H579.4V228.6L572.8 233.6L566.2 228.6z"/><path d="M572.8 236.2L579.4 241.2V245H566.2V241.2z"/><rect x="566.2" y="245" width="13.2" height="6.4"/><path d="M1352.6 236.2L1359 241.2V244.6H1346.2V241.2z"/></g>
<rect x="11" y="369" width="6.2" height="1" fill="#5c5c5c"/>
<rect x="11" y="345" width="6.2" height="1" fill="#5c5c5c"/>
<rect x="11" y="321" width="6.2" height="1" fill="#5c5c5c"/>
<rect x="11" y="298" width="6.2" height="1" fill="#5c5c5c"/>
<rect x="13.4" y="380.38" width="1.5" height="1.1" fill="#5c5c5c"/>
<rect x="13.4" y="356.75" width="1.5" height="1.1" fill="#5c5c5c"/>
<rect x="13.4" y="333.11" width="1.5" height="1.1" fill="#5c5c5c"/>
<rect x="13.4" y="309.48" width="1.5" height="1.1" fill="#5c5c5c"/>
<rect x="13.4" y="404.02" width="1.5" height="1.1" fill="#5c5c5c"/>
<rect x="11" y="416" width="6.2" height="1" fill="#5c5c5c"/>
<rect x="13.4" y="427.65" width="1.5" height="1.1" fill="#5c5c5c"/>
<text transform="translate(18.4 440.0) rotate(-90)" font-size="12" fill="#5c5c5c" text-anchor="middle">1</text>
<rect x="13.4" y="451.29" width="1.5" height="1.1" fill="#5c5c5c"/>
<rect x="11" y="463" width="6.2" height="1" fill="#5c5c5c"/>
<rect x="13.4" y="474.92" width="1.5" height="1.1" fill="#5c5c5c"/>
<text transform="translate(18.4 487.2) rotate(-90)" font-size="12" fill="#5c5c5c" text-anchor="middle">2</text>
<rect x="13.4" y="498.56" width="1.5" height="1.1" fill="#5c5c5c"/>
<rect x="11" y="510" width="6.2" height="1" fill="#5c5c5c"/>
<rect x="13.4" y="522.19" width="1.5" height="1.1" fill="#5c5c5c"/>
<text transform="translate(18.4 534.5) rotate(-90)" font-size="12" fill="#5c5c5c" text-anchor="middle">3</text>
<rect x="13.4" y="545.83" width="1.5" height="1.1" fill="#5c5c5c"/>
<rect x="11" y="558" width="6.2" height="1" fill="#5c5c5c"/>
<rect x="13.4" y="569.46" width="1.5" height="1.1" fill="#5c5c5c"/>
<text transform="translate(18.4 581.8) rotate(-90)" font-size="12" fill="#5c5c5c" text-anchor="middle">4</text>
<rect x="13.4" y="593.10" width="1.5" height="1.1" fill="#5c5c5c"/>
<rect x="11" y="605" width="6.2" height="1" fill="#5c5c5c"/>
<rect x="13.4" y="616.73" width="1.5" height="1.1" fill="#5c5c5c"/>
<text transform="translate(18.4 629.0) rotate(-90)" font-size="12" fill="#5c5c5c" text-anchor="middle">5</text>
<rect x="13.4" y="640.37" width="1.5" height="1.1" fill="#5c5c5c"/>
<rect x="11" y="652" width="6.2" height="1" fill="#5c5c5c"/>
<rect x="13.4" y="664.00" width="1.5" height="1.1" fill="#5c5c5c"/>
<text transform="translate(18.4 676.3) rotate(-90)" font-size="12" fill="#5c5c5c" text-anchor="middle">6</text>
<rect x="13.4" y="687.64" width="1.5" height="1.1" fill="#5c5c5c"/>
<rect x="11" y="699" width="6.2" height="1" fill="#5c5c5c"/>
<rect x="13.4" y="711.27" width="1.5" height="1.1" fill="#5c5c5c"/>
<text transform="translate(18.4 723.6) rotate(-90)" font-size="12" fill="#5c5c5c" text-anchor="middle">7</text>
<rect x="13.4" y="734.91" width="1.5" height="1.1" fill="#5c5c5c"/>
<rect x="11" y="747" width="6.2" height="1" fill="#5c5c5c"/>
<rect x="13.4" y="758.54" width="1.5" height="1.1" fill="#5c5c5c"/>
<text transform="translate(18.4 770.9) rotate(-90)" font-size="12" fill="#5c5c5c" text-anchor="middle">8</text>
<rect x="13.4" y="782.18" width="1.5" height="1.1" fill="#5c5c5c"/>
<rect x="11" y="794" width="6.2" height="1" fill="#5c5c5c"/>
<rect x="13.4" y="805.81" width="1.5" height="1.1" fill="#5c5c5c"/>
<text transform="translate(18.4 818.1) rotate(-90)" font-size="12" fill="#5c5c5c" text-anchor="middle">9</text>
<rect x="13.4" y="829.45" width="1.5" height="1.1" fill="#5c5c5c"/>
<rect x="11" y="841" width="6.2" height="1" fill="#5c5c5c"/>
<rect x="13.4" y="853.08" width="1.5" height="1.1" fill="#5c5c5c"/>
<text transform="translate(18.4 865.4) rotate(-90)" font-size="12" fill="#5c5c5c" text-anchor="middle">10</text>
<rect x="13.4" y="876.72" width="1.5" height="1.1" fill="#5c5c5c"/>
<rect x="11" y="889" width="6.2" height="1" fill="#5c5c5c"/>
<rect x="13.4" y="900.35" width="1.5" height="1.1" fill="#5c5c5c"/>
<text transform="translate(18.4 912.7) rotate(-90)" font-size="12" fill="#5c5c5c" text-anchor="middle">11</text>
<rect x="13.4" y="923.99" width="1.5" height="1.1" fill="#5c5c5c"/>
<rect x="11" y="936" width="6.2" height="1" fill="#5c5c5c"/>
<rect x="13.4" y="947.62" width="1.5" height="1.1" fill="#5c5c5c"/>
<text transform="translate(18.4 959.9) rotate(-90)" font-size="12" fill="#5c5c5c" text-anchor="middle">12</text>
<rect x="13.4" y="971.26" width="1.5" height="1.1" fill="#5c5c5c"/>
<rect x="11" y="983" width="6.2" height="1" fill="#5c5c5c"/>
<text x="14.4" y="1011.7" font-size="12.7" fill="#444444" textLength="65.6" lengthAdjust="spacingAndGlyphs">Page 1 of 1</text>
<text x="105.0" y="1011.7" font-size="12.7" fill="#444444" textLength="46.3" lengthAdjust="spacingAndGlyphs">0 words</text>
<text x="176.5" y="1011.7" font-size="12.7" fill="#444444" textLength="129.0" lengthAdjust="spacingAndGlyphs">English (United States)</text>
<text x="351.5" y="1011.7" font-size="12.7" fill="#444444" textLength="143.7" lengthAdjust="spacingAndGlyphs">Accessibility: Good to go</text>
<g fill="none" stroke="#2e2e2e" stroke-width="1.25" stroke-linecap="round" stroke-linejoin="round"><circle cx="337.7" cy="1001" r="2.1"/><path d="M335 1003.2C333.6 1002.6 332.6 1001.4 331.2 1001.4C329.8 1001.4 329.6 1003.2 330.8 1003.8C332.4 1004.6 334.4 1004.6 334.6 1006C334.9 1008.6 333.4 1011 333 1013C332.7 1014.8 334.6 1015.8 335.9 1014.3"/><path d="M340.4 1003.2C341.8 1002.6 342.8 1001.4 344.2 1001.4C345.6 1001.4 345.8 1003.2 344.6 1003.8C343 1004.6 340.7 1004.8 340.6 1006.2V1008.4"/><path d="M335 1003.2C336.6 1003.9 338.8 1003.9 340.4 1003.2"/><path d="M338.3 1011.3L342.2 1014.9L348.4 1008.6"/></g>
<g fill="none" stroke-width="1.4"><path d="M1478.7 1001.8V998.7H1481.8M1492 998.7H1495.1V1001.8M1495.1 1011.8V1014.9H1492M1481.8 1014.9H1478.7V1011.8" stroke="#4a4a4a"/><path d="M1482.8 1001.8H1488.2L1491.2 1004.8V1012.3H1482.8z M1488 1001.8V1005H1491.2" stroke="#1f1f1f" fill="#fafafa" stroke-linejoin="miter"/></g>
<text x="1499.3" y="1011.7" font-size="12.7" fill="#444444" textLength="31.7" lengthAdjust="spacingAndGlyphs">Focus</text>
<g fill="none" stroke="#3a3a3a" stroke-width="1.3" stroke-linejoin="round"><path d="M1571.5 1000C1569.6 998.7 1566.4 998.6 1563.9 998.9V1012.3C1566.4 1012 1569.6 1012.2 1571.5 1014C1573.4 1012.2 1576.6 1012 1579.1 1012.3V998.9C1576.6 998.6 1573.4 998.7 1571.5 1000zM1571.5 1000V1014"/><path d="M1566.2 1002.6H1569.2M1566.2 1007.4H1569.2M1573.7 1002.6H1576.8M1573.7 1007.4H1576.8" stroke-width="1.1"/><path d="M1566.2 1005H1569.2M1566.2 1009.8H1569.2M1573.7 1005H1576.8M1573.7 1009.8H1576.8" stroke-width="1.1" stroke="#777"/></g>
<g fill="none" stroke="#3a3a3a"><rect x="1615.2" y="999" width="12.1" height="16" stroke-width="1.5" fill="#fff"/><path d="M1617.3 1001.3H1625.7M1617.3 1006.4H1625.7M1617.3 1011.4H1625.7" stroke-width="1.2"/><path d="M1617.3 1003.8H1625.7M1617.3 1008.9H1625.7" stroke-width="1.2" stroke="#666"/></g>
<g fill="none" stroke="#3a3a3a" stroke-width="1.3"><path d="M1669.6 1013.8H1663.8V999H1679V1004.2" fill="#fff"/><path d="M1663.2 999.2H1679.6" stroke-width="1.7"/><path d="M1666 1001.6H1677M1666 1004H1672.6M1666 1006.5H1669.4M1666 1009H1668.6M1666 1011.4H1668.6" stroke-width="1.1"/><circle cx="1675.3" cy="1010" r="5.1" fill="#f0f0f0" stroke-width="1.7"/><path d="M1670.4 1010H1680.2M1675.3 1005V1015" stroke-width="1.4"/><ellipse cx="1675.3" cy="1010" rx="2.5" ry="5" stroke-width="1.3"/></g>
<path d="M1703.8 1006.5H1713.2" stroke="#444" stroke-width="1.2"/><path d="M1720 1006.5H1845" stroke="#8a8a8a" stroke-width="1"/><rect x="1780.2" y="999.8" width="5.6" height="13.8" rx=".8" fill="#666"/><path d="M1851 1006.5H1860.4M1855.7 1001.8V1011.2" stroke="#444" stroke-width="1.2"/>
<text x="1877.6" y="1011.7" font-size="12.7" fill="#444444" textLength="30.5" lengthAdjust="spacingAndGlyphs">100%</text>
</svg>
</body></html>
